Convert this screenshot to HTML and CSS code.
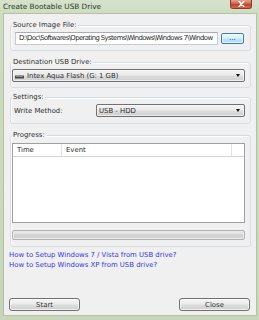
FILE: index.html
```html
<!DOCTYPE html>
<html>
<head>
<meta charset="utf-8">
<title>Create Bootable USB Drive</title>
<link rel="stylesheet" href="styles.css">
</head>
<body>
<div class="window">
  <div class="titlebar">
    <span class="title">Create Bootable USB Drive</span>
    <span class="close-btn"><svg width="9" height="6" viewBox="0 0 9 6"><path d="M2.2 0.6 L6.8 5.4 M6.8 0.6 L2.2 5.4" stroke="#fff" stroke-width="1.5" stroke-linecap="round"/></svg></span>
  </div>
  <div class="client">
    <fieldset class="group g-source">
      <legend>Source Image File:</legend>
      <div class="row">
        <div class="textbox">D:\Doc\Softwares\Operating Systems\Windows\Windows 7\Window</div>
        <div class="btn btn-browse">...</div>
      </div>
    </fieldset>
    <fieldset class="group g-dest">
      <legend>Destination USB Drive:</legend>
      <div class="combo">
        <svg class="drive" width="9" height="4" viewBox="0 0 9 4"><rect x="0" y="0.5" width="9" height="3" rx="0.5" fill="#4a4a4a"/><rect x="1" y="1" width="7" height="1" fill="#8a8a8a"/></svg>
        <span class="combo-text">Intex Aqua Flash (G: 1 GB)</span>
        <span class="arrow"></span>
      </div>
    </fieldset>
    <fieldset class="group g-settings">
      <legend>Settings:</legend>
      <div class="row">
        <span class="field-label">Write Method:</span>
        <div class="combo combo-method">
          <span class="combo-text">USB - HDD</span>
          <span class="arrow"></span>
        </div>
      </div>
    </fieldset>
    <fieldset class="group g-progress">
      <legend>Progress:</legend>
      <div class="listview">
        <div class="lv-header">
          <span class="col col-time">Time</span>
          <span class="col col-event">Event</span>
          <span class="col col-rest"></span>
        </div>
      </div>
      <div class="progressbar"></div>
    </fieldset>
    <div class="links">
      <a class="link">How to Setup Windows 7 / Vista from USB drive?</a>
      <a class="link">How to Setup Windows XP from USB drive?</a>
    </div>
    <div class="buttons">
      <div class="btn btn-action">Start</div>
      <div class="btn btn-action">Close</div>
    </div>
  </div>
</div>
</body>
</html>
```
FILE: styles.css
```css
* { box-sizing: border-box; }
html, body { margin: 0; padding: 0; }
body {
  width: 259px;
  height: 320px;
  overflow: hidden;
  font-family: "DejaVu Sans", sans-serif;
  font-size: 6.9px;
  color: #2a2a2a;
  background: #c8d7ba;
}
.window {
  width: 259px;
  height: 320px;
  display: flex;
  flex-direction: column;
  background: linear-gradient(to bottom, #d6e2cb 0px, #cedcc1 14px, #c7d6b9 100%);
}
.titlebar {
  height: 14px;
  flex: none;
  display: flex;
  justify-content: space-between;
  align-items: flex-start;
  padding: 0 7px 0 3px;
}
.title {
  font-size: 7.3px;
  line-height: 14px;
  color: #2b3526;
}
.close-btn {
  width: 22px;
  height: 9px;
  display: flex;
  align-items: center;
  justify-content: center;
  background: linear-gradient(to bottom, #e0a393 0%, #d2644f 45%, #c5402c 55%, #d86a4c 100%);
  border: 1px solid #8c3a2c;
  border-top: none;
  border-radius: 0 0 3px 3px;
}
.client {
  flex: 1;
  margin: 0 3px 5px 4px;
  background: #f0f0f0;
  box-shadow: 0 0 0 1px #b3c2a7;
  display: flex;
  flex-direction: column;
  padding: 0 5px 4px 5px;
}
.group {
  margin: 7px 0 0 1px;
  padding: 3px 5px 5px 1px;
  border: 1px solid #d5dfe5;
  border-radius: 3px;
  min-width: 0;
  box-shadow: inset 1px 1px 0 #fff;
}
.group legend {
  padding: 0 1px;
  line-height: 8px;
  color: #2a2a2a;
}
.g-settings { margin-top: 5px; padding-bottom: 6px; }
.g-progress { padding-top: 4px; padding-bottom: 6px; }
.row {
  display: flex;
  align-items: center;
}
.g-source .row { margin-left: 3px; margin-right: 1px; gap: 3px; }
.textbox {
  flex: 1;
  height: 13px;
  min-width: 0;
  background: #fff;
  border: 1px solid #c6cbd1;
  border-top-color: #abadb3;
  padding-left: 3px;
  line-height: 11px;
  letter-spacing: -0.62px;
  white-space: nowrap;
  overflow: hidden;
  color: #2a2a2a;
}
.btn {
  display: flex;
  align-items: center;
  justify-content: center;
  color: #333;
  border: 1px solid #707070;
  border-radius: 2px;
  background: linear-gradient(to bottom, #f4f4f4 0%, #ebebeb 48%, #dddddd 52%, #cfcfcf 100%);
  box-shadow: inset 0 0 0 1px rgba(255,255,255,0.7);
}
.btn-browse {
  width: 23px;
  height: 11px;
  border-color: #3c7fb1;
  background: linear-gradient(to bottom, #eaf6fd 0%, #d9f0fc 48%, #bee6fd 52%, #a7d9f5 100%);
  line-height: 9px;
  padding-bottom: 1px;
}
.combo {
  height: 13px;
  display: flex;
  align-items: center;
  border: 1px solid #707070;
  border-radius: 2px;
  background: linear-gradient(to bottom, #f2f2f2 0%, #ebebeb 48%, #dddddd 52%, #cfcfcf 100%);
  box-shadow: inset 0 0 0 1px rgba(255,255,255,0.6);
  padding: 0 4px 0 2px;
}
.drive { flex: none; margin-right: 3px; margin-top: 2px; }
.combo-text { flex: 1; white-space: nowrap; overflow: hidden; color: #2a2a2a; }
.arrow {
  flex: none;
  width: 0;
  height: 0;
  border-left: 2.5px solid transparent;
  border-right: 2.5px solid transparent;
  border-top: 3px solid #111;
}
.field-label {
  width: 84px;
  flex: none;
  padding-left: 2px;
}
.combo-method { flex: 1; padding-left: 2px; }
.listview {
  height: 80px;
  background: #fff;
  border: 1px solid #a0a0a0;
}
.lv-header {
  height: 13px;
  display: flex;
  border-bottom: 1px solid #d5d5d5;
  background: #fff;
}
.col {
  line-height: 12px;
  border-right: 1px solid #e3e3e3;
  padding-left: 4px;
}
.col-time { width: 49px; }
.col-event { width: 170px; }
.col-rest { flex: 1; border-right: none; }
.progressbar {
  margin-top: 7px;
  height: 10px;
  border: 1px solid #b2b2b2;
  border-radius: 2px;
  background: linear-gradient(to bottom, #f3f3f3 0%, #dcdcdc 35%, #cfcfcf 60%, #d8d8d8 100%);
  box-shadow: inset 0 0 0 1px #e9e9e9;
}
.links {
  margin-top: 3px;
  display: flex;
  flex-direction: column;
}
.link {
  line-height: 10px;
  color: #3434ee;
  text-decoration: none;
}
.buttons {
  margin-top: auto;
  display: flex;
  justify-content: space-between;
  padding-right: 1px;
}
.btn-action {
  width: 71px;
  height: 13px;
  border-radius: 3px;
}
```
